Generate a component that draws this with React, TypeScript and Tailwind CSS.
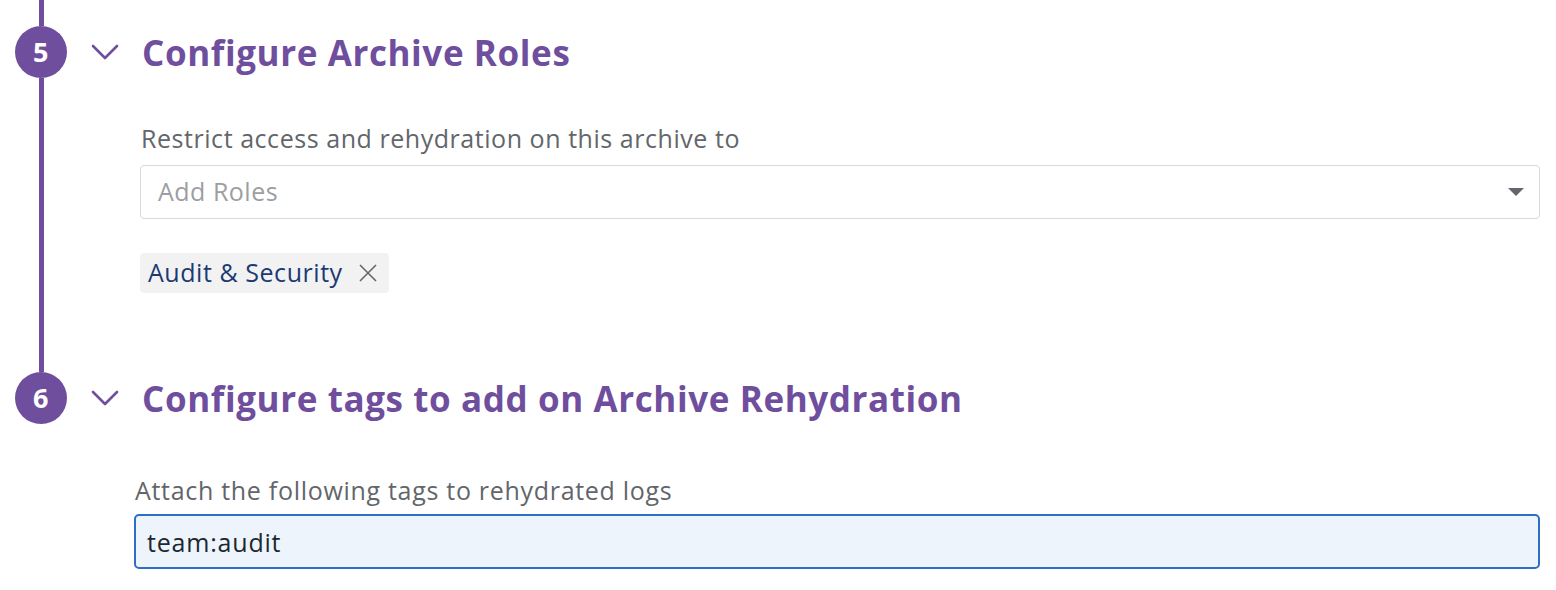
type StepHeaderProps = {
  title: string;
};

const Chevron = () => (
  <svg width="28" height="16" viewBox="0 0 28 16" className="ml-[9px] shrink-0">
    <polyline points="2,2 14,14 26,2" fill="none" stroke="#6f4e9e" strokeWidth="2.6" strokeLinecap="round" strokeLinejoin="round" />
  </svg>
);

const StepHeader = ({ title }: StepHeaderProps) => (
  <div className="flex h-[52px] items-center">
    <Chevron />
    <h2 className="ml-[23px] text-[35px] font-bold leading-none tracking-[0.6px] text-[#6f4e9e]">
      {title}
    </h2>
  </div>
);

const StepBadge = ({ num }: { num: number }) => (
  <div className="flex h-[52px] w-[52px] shrink-0 items-center justify-center rounded-full bg-[#6f4e9e] text-[27px] font-bold text-white">
    {num}
  </div>
);

export default function App() {
  return (
    <div
      className="flex h-[590px] w-[1556px] flex-col overflow-hidden bg-white tracking-[0.5px]"
      style={{ fontFamily: '"Open Sans", "Noto Sans", sans-serif' }}
    >
      {/* step 5 */}
      <div className="flex h-[372px]">
        <div className="flex w-[82px] shrink-0 flex-col items-center">
          <div className="h-[26px] w-[5px] bg-[#6f4e9e]" />
          <StepBadge num={5} />
          <div className="w-[5px] flex-1 bg-[#6f4e9e]" />
        </div>
        <div className="flex flex-1 flex-col pt-[26px] pr-[16px]">
          <StepHeader title="Configure Archive Roles" />
          <div className="mt-[44px] flex flex-col pl-[58px]">
            <label className="pl-[1px] text-[25px] leading-[32px] tracking-[0.55px] text-[#62666b]">
              Restrict access and rehydration on this archive to
            </label>
            <div className="mt-[11px] flex h-[54px] items-center justify-between rounded-[4px] border border-[#d9dadd] pr-[15px] pl-[17px]">
              <span className="text-[25px] text-[#9b9ea3]">Add Roles</span>
              <span className="h-0 w-0 border-x-[8px] border-t-[8px] border-x-transparent border-t-[#63676c]" />
            </div>
            <div className="mt-[34px] flex">
              <span className="flex h-[40px] items-center gap-[15px] rounded-[4px] bg-[#f2f2f3] pr-[11px] pl-[8px] text-[25px] tracking-[0.55px] text-[#1c3a72]">
                Audit &amp; Security
                <svg width="20" height="20" viewBox="0 0 20 20">
                  <path d="M2 2 L18 18 M18 2 L2 18" stroke="#63676c" strokeWidth="1.6" fill="none" />
                </svg>
              </span>
            </div>
          </div>
        </div>
      </div>

      {/* step 6 */}
      <div className="flex flex-1">
        <div className="flex w-[82px] shrink-0 flex-col items-center">
          <StepBadge num={6} />
        </div>
        <div className="flex flex-1 flex-col pr-[16px]">
          <StepHeader title="Configure tags to add on Archive Rehydration" />
          <div className="mt-[50px] flex flex-col pl-[52px]">
            <label className="pl-[1px] text-[25px] leading-[32px] tracking-[0.7px] text-[#62666b]">
              Attach the following tags to rehydrated logs
            </label>
            <input
              className="mt-[8px] h-[55px] rounded-[5px] border-2 border-[#2d6fc4] bg-[#edf4fc] px-[11px] text-[25px] tracking-[0.8px] text-[#1b2832] outline-none"
              defaultValue="team:audit"
            />
          </div>
        </div>
      </div>
    </div>
  );
}
